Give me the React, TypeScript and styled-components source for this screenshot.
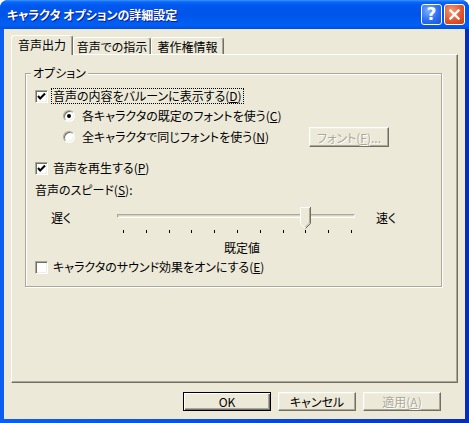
import styled, { createGlobalStyle } from 'styled-components';

const uiFont = `'Noto Sans CJK JP', 'Noto Sans', sans-serif`;

const GlobalStyle = createGlobalStyle`
  html, body { margin: 0; padding: 0; background: #fff; }
  #root { width: 469px; height: 423px; }
`;

const Window = styled.div`
  width: 469px;
  height: 423px;
  display: flex;
  flex-direction: column;
  background: linear-gradient(to right, #0b5ef0 0, #0a50e4 40%, #0a3ccc 80%, #0a2cae 100%);
  border-radius: 8px 8px 0 0;
  overflow: hidden;
  font-family: ${uiFont};
  font-size: 12px;
  font-feature-settings: 'palt';
  color: #000;
`;

const TitleBar = styled.div`
  height: 29px;
  flex: none;
  display: flex;
  align-items: center;
  padding: 0 4px 0 7px;
  background: linear-gradient(to bottom, #3d95ff 0, #0a66f8 2px, #0058ee 6px, #0054e8 50%, #005ff6 86%, #004fdf 100%);
`;

const Title = styled.div`
  flex: 1;
  color: #fff;
  font-weight: bold;
  font-size: 12px;
  text-shadow: 1px 1px 0 #0a1c8a;
  white-space: nowrap;
`;

const CaptionButton = styled.div<{ $kind: 'help' | 'close' }>`
  width: 21px;
  height: 21px;
  box-sizing: border-box;
  border: 1px solid #fff;
  border-radius: 3px;
  display: flex;
  align-items: center;
  justify-content: center;
  margin-left: 2px;
  color: #fff;
  font-family: 'DejaVu Sans', sans-serif;
  font-weight: bold;
  font-size: 17px;
  line-height: 1;
  background: ${p =>
    p.$kind === 'close'
      ? 'radial-gradient(circle at 35% 30%, #f29a76 0, #e1572e 55%, #c43c14 100%)'
      : 'radial-gradient(circle at 35% 30%, #7fb0ff 0, #2a6ef0 55%, #1a52d8 100%)'};
`;

const Body = styled.div`
  flex: 1;
  margin: 0 4px 4px;
  background: #ece9d8;
  display: flex;
  flex-direction: column;
  padding: 6px 7px 0;
`;

const TabStrip = styled.div`
  height: 19px;
  display: flex;
  align-items: flex-end;
`;

const Tab = styled.div<{ $active?: boolean; $w: number }>`
  width: ${p => p.$w}px;
  height: ${p => (p.$active ? 20 : 17)}px;
  margin-bottom: ${p => (p.$active ? -1 : 0)}px;
  box-sizing: border-box;
  position: relative;
  z-index: ${p => (p.$active ? 1 : 0)};
  background: #ece9d8;
  border-top: 1px solid #fff;
  border-left: 1px solid #fff;
  border-right: 1px solid #716f64;
  box-shadow: inset -1px 0 0 #aca899;
  border-radius: 3px 3px 0 0;
  display: flex;
  align-items: center;
  justify-content: center;
  padding-bottom: ${p => (p.$active ? 3 : 0)}px;
  white-space: nowrap;
`;

const TabPage = styled.div`
  height: 329px;
  box-sizing: border-box;
  border: 1px solid;
  border-color: #fff #716f64 #716f64 #fff;
  box-shadow: inset -1px -1px 0 #aca899;
  padding: 18px 15px 0 13px;
`;

const GroupBox = styled.div`
  position: relative;
  border: 1px solid #aca899;
  box-shadow: 1px 1px 0 #fff, inset 1px 1px 0 #fff;
  padding: 13px 0 10px 9px;
  display: flex;
  flex-direction: column;
`;

const Legend = styled.span`
  position: absolute;
  top: -9px;
  left: 5px;
  padding: 0 2px;
  line-height: 16px;
  background: #ece9d8;
`;

const Row = styled.div<{ $h: number; $mt?: number; $indent?: number }>`
  height: ${p => p.$h}px;
  margin-top: ${p => p.$mt ?? 0}px;
  padding-left: ${p => p.$indent ?? 0}px;
  display: flex;
  align-items: center;
  white-space: nowrap;
`;

const CheckBox = styled.span`
  width: 13px;
  height: 13px;
  flex: none;
  box-sizing: border-box;
  background: #fff;
  border: 1px solid;
  border-color: #aca899 #fff #fff #aca899;
  box-shadow: inset 1px 1px 0 #716f64, inset -1px -1px 0 #f1efe2;
  display: flex;
  align-items: center;
  justify-content: center;
`;

const Radio = styled.span`
  width: 12px;
  height: 12px;
  flex: none;
  box-sizing: border-box;
  border-radius: 50%;
  background: #fff;
  border: 1px solid;
  border-color: #aca899 #fff #fff #aca899;
  box-shadow: inset 1px 1px 0 #716f64, inset -1px -1px 0 #f1efe2;
  display: flex;
  align-items: center;
  justify-content: center;
`;

const Dot = styled.span`
  width: 4px;
  height: 4px;
  border-radius: 50%;
  background: #000;
`;

const Label = styled.span<{ $gap: number; $focus?: boolean }>`
  margin-left: ${p => p.$gap}px;
  padding: 0 1px;
  line-height: 14px;
  border: 1px dotted ${p => (p.$focus ? '#000' : 'transparent')};
`;

const PushButton = styled.button<{ $w: number; $h: number; $primary?: boolean; $ml?: string; $mr?: number }>`
  width: ${p => p.$w}px;
  height: ${p => p.$h}px;
  margin-left: ${p => p.$ml ?? '0'};
  margin-right: ${p => p.$mr ?? 0}px;
  box-sizing: border-box;
  padding: 0;
  background: #ece9d8;
  font-family: ${uiFont};
  font-size: 12px;
  font-weight: normal;
  font-feature-settings: 'palt';
  color: #000;
  border: 1px solid;
  border-color: ${p => (p.$primary ? '#000' : '#fff #716f64 #716f64 #fff')};
  box-shadow: ${p =>
    p.$primary
      ? 'inset 1px 1px 0 #fff, inset -1px -1px 0 #716f64, inset -2px -2px 0 #aca899'
      : 'inset -1px -1px 0 #aca899, inset 1px 1px 0 #f1efe2'};
  white-space: nowrap;

  &:disabled {
    color: #aca899;
    text-shadow: 1px 1px 0 #fff;
  }
`;

const EndLabel = styled.span<{ $w?: number; $ml?: number }>`
  width: ${p => (p.$w ? `${p.$w}px` : 'auto')};
  margin-left: ${p => p.$ml ?? 0}px;
  flex: none;
`;

const Slider = styled.div`
  position: relative;
  width: 238px;
  height: 22px;
  flex: none;
  align-self: flex-start;
`;

const Track = styled.div`
  margin-top: 8px;
  height: 4px;
  box-sizing: border-box;
  border: 1px solid;
  border-color: #aca899 #fff #fff #aca899;
  box-shadow: inset 1px 1px 0 #d6d2c2;
`;

const Thumb = styled.svg`
  position: absolute;
  top: 1px;
`;

const Ticks = styled.div`
  width: 229px;
  height: 5px;
  margin-left: 88px;
  display: flex;
  justify-content: space-between;
  align-items: flex-start;
  padding-top: 1px;
  box-sizing: border-box;
`;

const Tick = styled.span`
  width: 1px;
  height: 3px;
  background: #000;
`;

const ButtonRow = styled.div`
  margin-top: 9px;
  height: 19px;
  display: flex;
  justify-content: flex-end;
  gap: 7px;
  padding-right: 17px;
`;

function Check({ on }: { on: boolean }) {
  return (
    <CheckBox>
      {on && (
        <svg width="9" height="9" viewBox="0 0 9 9">
          <polyline points="1,4 3.2,6.5 8,1.5" fill="none" stroke="#000" strokeWidth="2" />
        </svg>
      )}
    </CheckBox>
  );
}

const speed = 8;

export default function App() {
  const thumbLeft = 6 + (speed / 10) * 228 - 5;

  return (
    <>
      <GlobalStyle />
      <Window>
        <TitleBar>
          <Title>キャラクタ オプションの詳細設定</Title>
          <CaptionButton $kind="help">?</CaptionButton>
          <CaptionButton $kind="close">
            <svg width="11" height="11" viewBox="0 0 11 11">
              <path d="M1.5 1.5 L9.5 9.5 M9.5 1.5 L1.5 9.5" stroke="#fff" strokeWidth="2.4" strokeLinecap="square" />
            </svg>
          </CaptionButton>
        </TitleBar>

        <Body>
          <TabStrip>
            <Tab $active $w={62}>音声出力</Tab>
            <Tab $w={78}>音声での指示</Tab>
            <Tab $w={73}>著作権情報</Tab>
          </TabStrip>

          <TabPage>
            <GroupBox>
              <Legend>オプション</Legend>

              <Row $h={18}>
                <Check on />
                <Label $gap={3} $focus>音声の内容をバルーンに表示する(<u>D</u>)</Label>
              </Row>
              <Row $h={18} $mt={2} $indent={28}>
                <Radio><Dot /></Radio>
                <Label $gap={5}>各キャラクタの既定のフォントを使う(<u>C</u>)</Label>
              </Row>
              <Row $h={20} $mt={2} $indent={28}>
                <Radio />
                <Label $gap={5}>全キャラクタで同じフォントを使う(<u>N</u>)</Label>
                <PushButton $w={80} $h={20} $ml="auto" $mr={52} disabled>
                  フォント(<u>F</u>)...
                </PushButton>
              </Row>
              <Row $h={18} $mt={12}>
                <Check on />
                <Label $gap={3}>音声を再生する(<u>P</u>)</Label>
              </Row>
              <Row $h={18} $mt={3}>
                音声のスピード(<u>S</u>):
              </Row>
              <Row $h={22} $mt={8} $indent={16}>
                <EndLabel $w={66}>遅く</EndLabel>
                <Slider>
                  <Track />
                  <Thumb width="11" height="22" viewBox="0 0 11 22" style={{ left: thumbLeft }}>
                    <polygon points="0,0 11,0 11,16 5.5,21.5 0,16" fill="#ece9d8" />
                    <path d="M0.5 16 V0.5 H10" fill="none" stroke="#fff" />
                    <path d="M0.5 16.5 L5 21" fill="none" stroke="#fff" />
                    <path d="M10.5 0 V16.5 L5.5 21.5" fill="none" stroke="#716f64" />
                    <path d="M9.5 1 V16 L5.5 20" fill="none" stroke="#aca899" />
                  </Thumb>
                </Slider>
                <EndLabel $ml={21}>速く</EndLabel>
              </Row>
              <Row $h={5} $mt={1}>
                <Ticks>
                  {Array.from({ length: 11 }).map((_, i) => (
                    <Tick key={i} />
                  ))}
                </Ticks>
              </Row>
              <Row $h={18} $mt={4} $indent={189}>
                既定値
              </Row>
              <Row $h={18} $mt={2}>
                <Check on={false} />
                <Label $gap={3}>キャラクタのサウンド効果をオンにする(<u>E</u>)</Label>
              </Row>
            </GroupBox>
          </TabPage>

          <ButtonRow>
            <PushButton $w={88} $h={19} $primary>OK</PushButton>
            <PushButton $w={78} $h={19}>キャンセル</PushButton>
            <PushButton $w={78} $h={19} disabled>適用(<u>A</u>)</PushButton>
          </ButtonRow>
        </Body>
      </Window>
    </>
  );
}
